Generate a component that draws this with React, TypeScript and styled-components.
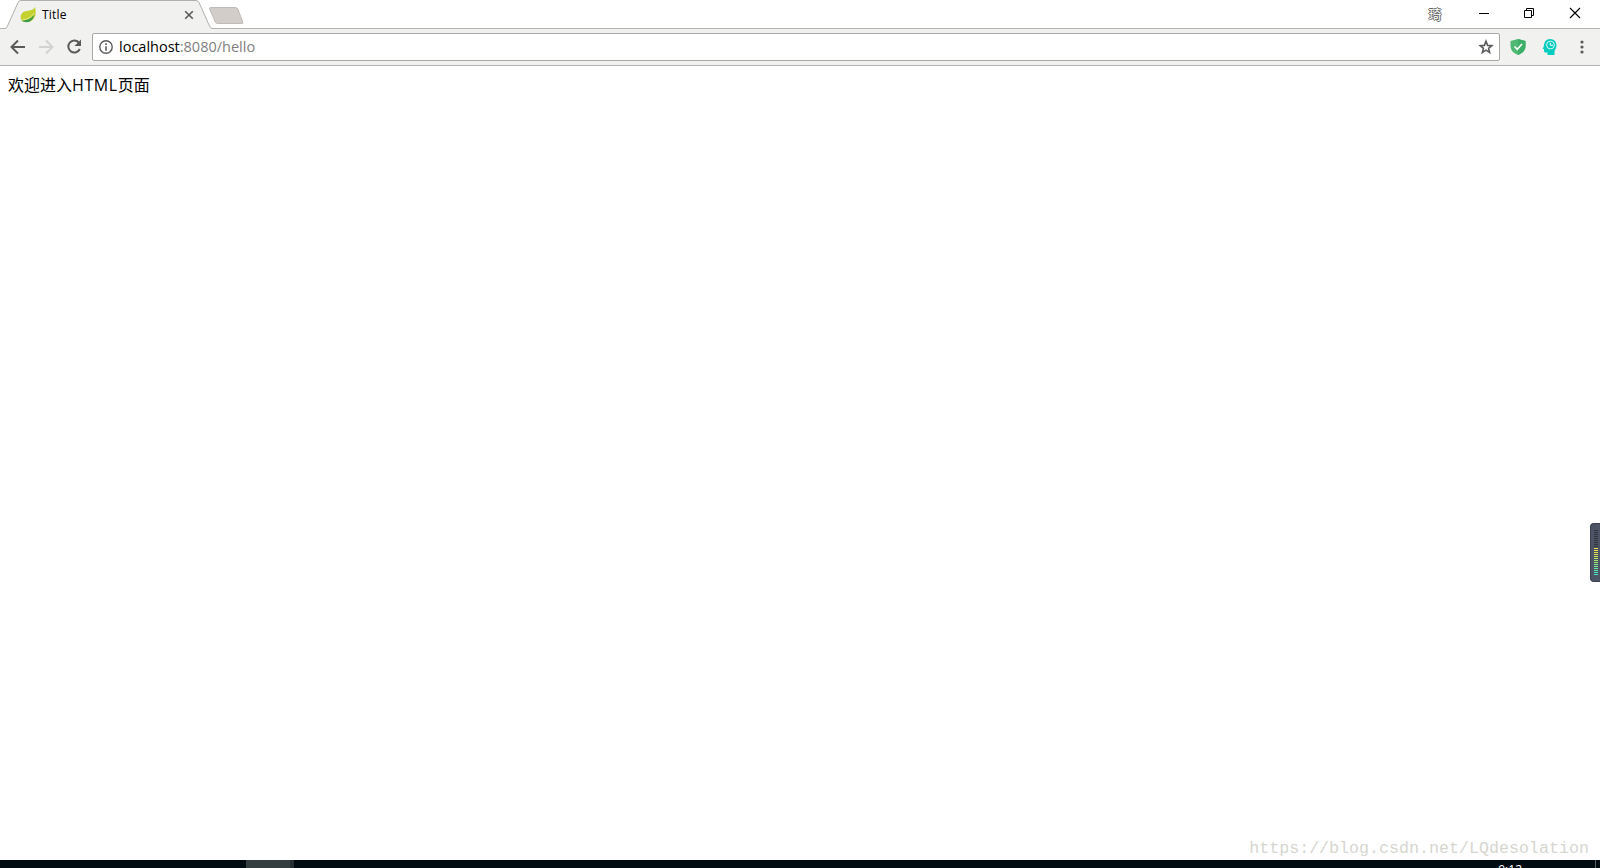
import styled, { createGlobalStyle } from 'styled-components';

const GlobalStyle = createGlobalStyle`
  * {
    box-sizing: border-box;
  }

  body {
    margin: 0;
    overflow: hidden;
    background: #fff;
    font-family: 'Open Sans', 'Noto Sans CJK SC', sans-serif;
  }
`;

const Window = styled.div`
  display: flex;
  flex-direction: column;
  width: 100%;
  height: 868px;
  position: relative;
  overflow: hidden;
`;

const TabStrip = styled.header`
  display: flex;
  height: 29px;
  flex: none;
  background: linear-gradient(#b5b4b1, #b5b4b1) 0 28px / 100% 1px no-repeat #fff;
`;

const Tab = styled.div`
  position: relative;
  display: flex;
  align-items: center;
  width: 207px;
  height: 29px;
  margin-left: 5px;
  padding: 1px 18px 0 15px;
`;

const TabShape = styled.svg`
  position: absolute;
  inset: 0;
`;

const Favicon = styled.svg`
  position: relative;
  flex: none;
`;

const TabTitle = styled.span`
  position: relative;
  flex: 1;
  margin-left: 6px;
  font-size: 12px;
  line-height: 16px;
  letter-spacing: 0.2px;
  color: #000;
`;

const CloseTab = styled.svg`
  position: relative;
  flex: none;
`;

const NewTab = styled.svg`
  margin: 6px 0 0 -4px;
`;

const Caption = styled.div`
  display: flex;
  margin-left: auto;
  padding-top: 4px;
`;

const CaptionButton = styled.svg`
  margin-right: 29px;

  &:nth-last-child(2) {
    margin-right: 28px;
  }

  &:last-child {
    margin-right: 16px;
  }
`;

const Profile = styled.span`
  width: 18px;
  margin-right: 32px;
  padding-top: 1px;
  font-family: 'Noto Sans CJK SC', sans-serif;
  font-size: 13px;
  line-height: 18px;
  text-align: center;
  color: #fff;
  text-shadow: 1px 0 #666, -1px 0 #666, 0 1px #666, 0 -1px #666;
`;

const Toolbar = styled.nav`
  display: flex;
  align-items: center;
  height: 37px;
  flex: none;
  padding: 0 15px 1px 8px;
  background: #f1f1f0;
  border-bottom: 1px solid #b5b4b1;
`;

const NavIcon = styled.svg<{ $gap: number }>`
  flex: none;
  margin-right: ${({ $gap }) => $gap}px;
`;

const AddressBar = styled.div`
  display: flex;
  align-items: center;
  flex: 1;
  height: 28px;
  padding: 0 5px 0 6px;
  background: #fff;
  border: 1px solid #a9a9a7;
  border-radius: 2px;
`;

const Url = styled.span`
  flex: 1;
  margin-left: 6px;
  font-size: 14.5px;
  line-height: 20px;
  color: #7f7f7f;
`;

const Host = styled.span`
  color: #000;
`;

const Extensions = styled.div`
  display: flex;
  align-items: center;
  margin-left: 10px;
`;

const Page = styled.main`
  flex: 1;
  padding: 9px 8px 8px;
  font-family: 'Open Sans', 'Noto Sans CJK SC', sans-serif;
  font-size: 16px;
  line-height: 21px;
  color: #000;
`;

const Latin = styled.span`
  letter-spacing: 0.6px;
`;

const LevelMeter = styled.aside`
  position: absolute;
  top: 523px;
  right: 0;
  display: flex;
  flex-direction: column;
  gap: 1px;
  width: 10px;
  height: 59px;
  padding: 6px 2px 0 3px;
  background: #4c5465;
  border: 1px solid #3b4150;
  border-right: 0;
  border-radius: 4px 0 0 4px;
`;

const LevelBar = styled.i<{ $color: string }>`
  flex: none;
  width: 4px;
  height: 1px;
  background: ${({ $color }) => $color};
`;

const Watermark = styled.span`
  position: absolute;
  right: 11px;
  bottom: 7px;
  font-family: 'Liberation Mono', monospace;
  font-size: 16.66px;
  line-height: 24px;
  color: #d6d6cf;
`;

const Taskbar = styled.footer`
  display: flex;
  height: 8px;
  flex: none;
  overflow: hidden;
  background: #000c11;
`;

const ActiveTask = styled.div`
  width: 48px;
  margin-left: 246px;
  background: #343d3f;
  border-right: 4px solid #252e30;
`;

const Clock = styled.span`
  margin: 2px 73px 0 auto;
  font-size: 12px;
  line-height: 16px;
  color: #fff;
`;

const ShowDesktop = styled.div`
  width: 5px;
  border-left: 1px solid #596164;
`;

const idleLevels = Array(9).fill('#30343f');

const activeLevels = [
  '#f2dd45', '#ece04a', '#e2e24e', '#d8e354', '#c9e65a', '#bae862', '#aae96c',
  '#9aec78', '#8aec84', '#7aec91', '#6aeb9e', '#5ce9ac', '#50e6b9', '#45e3c4',
];

const App = () => {
  return (
    <Window>
      <GlobalStyle />
      <TabStrip>
        <Tab>
          <TabShape width="207" height="29">
            <path d="M0 28.5Q1.5 28.5 2.5 26L13 2.5Q13.8 .5 15.5 .5H191Q193 .5 194 2.5L204.5 26Q205.5 28.5 207 28.5V29H0Z" fill="#f1f1f0" />
            <path d="M0 28.5Q1.5 28.5 2.5 26L13 2.5Q13.8 .5 15.5 .5H191Q193 .5 194 2.5L204.5 26Q205.5 28.5 207 28.5" fill="none" stroke="#b0afac" />
          </TabShape>
          <Favicon width="16" height="16" viewBox="0 0 16 16">
            <path d="M15 0C16 4 16.5 9 13 12.5C10 15.5 5 15.5 2 14C0 12 0 7.500 3 5.300C6.500 3 12.500 4.500 15 0Z" fill="#c4d12e" />
            <path d="M1.500 13.500C6 13.500 11 12 14.500 7.500C13.500 12 10.500 15.200 6.500 15.200C4.500 15.200 2.800 14.800 1.500 13.500Z" fill="#3b9b49" />
            <path d="M1.500 13C7 12.800 11.500 10.500 14.200 6" fill="none" stroke="#eef0ae" strokeWidth=".7" />
          </Favicon>
          <TabTitle>Title</TabTitle>
          <CloseTab width="10" height="10">
            <path d="M1.200 1.200L8.800 8.800M8.800 1.200L1.200 8.800" stroke="#5a5a5a" strokeWidth="1.600" />
          </CloseTab>
        </Tab>
        <NewTab width="36" height="19">
          <path d="M2.500 1.500H27.500Q29 1.500 29.800 3L35 16.500Q35.200 17.500 34 17.500H9.500Q8 17.500 7.300 16L1.500 3Q1 1.500 2.500 1.500Z" fill="#d2cdc8" stroke="#bfbbb7" />
        </NewTab>
        <Caption>
          <Profile>琦</Profile>
          <CaptionButton width="16" height="18">
            <path d="M3 9.500H13" stroke="#000" />
          </CaptionButton>
          <CaptionButton width="17" height="18">
            <path d="M3.500 6.500H10.500V13.500H3.500ZM5.500 6V4.500H12.500V11.500H11" fill="none" stroke="#000" />
          </CaptionButton>
          <CaptionButton width="18" height="18">
            <path d="M4 4L14 14M14 4L4 14" stroke="#000" strokeWidth="1.100" />
          </CaptionButton>
        </Caption>
      </TabStrip>
      <Toolbar>
        <NavIcon $gap={8} width="20" height="20">
          <path d="M17 10H4M10 3.500L3.500 10L10 16.500" fill="none" stroke="#5a5a5a" strokeWidth="2" />
        </NavIcon>
        <NavIcon $gap={8} width="20" height="20">
          <path d="M3 10H16M10 3.500L16.500 10L10 16.500" fill="none" stroke="#d3d2d0" strokeWidth="2" />
        </NavIcon>
        <NavIcon $gap={8} width="20" height="20">
          <path d="M14.800 5.500A6 6 0 1 0 15.800 12" fill="none" stroke="#5a5a5a" strokeWidth="2" />
          <path d="M17 2.500V9H10.500Z" fill="#5a5a5a" />
        </NavIcon>
        <AddressBar>
          <svg width="14" height="14">
            <circle cx="7" cy="7" r="6.200" fill="none" stroke="#5a5a5a" strokeWidth="1.400" />
            <path d="M7 3.300V4.900M7 6.200V10.800" stroke="#5a5a5a" strokeWidth="1.600" />
          </svg>
          <Url>
            <Host>localhost</Host>:8080/hello
          </Url>
          <svg width="16" height="16" viewBox="0 0 16 16">
            <path d="M8 2.300L9.600 6.400L13.800 6.700L10.600 9.400L11.600 13.500L8 11.200L4.400 13.500L5.400 9.400L2.200 6.700L6.400 6.400Z" fill="none" stroke="#5a5a5a" strokeWidth="1.600" />
          </svg>
        </AddressBar>
        <Extensions>
          <NavIcon $gap={16} width="16" height="16">
            <path d="M8 0L15.500 2V7C15.500 11.500 12 14.500 8 16C4 14.500 .5 11.500 .5 7V2Z" fill="#4fb873" />
            <path d="M8 0L15.500 2V7C15.500 11.500 12 14.500 8 16Z" fill="#3dae67" />
            <path d="M4.500 7.500L7.300 10.300L12 5" fill="none" stroke="#fff" strokeWidth="1.700" />
          </NavIcon>
          <NavIcon $gap={22} width="16" height="16">
            <path d="M8 0C12 0 14.500 2.800 14.500 6.500C14.500 9.500 12.500 10.500 12.500 13V16H5.500V13.500H3.500Q2 13.500 2 12V10H.8L2 6.500C2 2.800 4.500 0 8 0Z" fill="#00cdbf" />
            <circle cx="8.500" cy="6" r="3.900" fill="none" stroke="#d9f8f5" strokeWidth="1" />
            <path d="M8.300 3.800V6.300H11" fill="none" stroke="#fff" strokeWidth="1" />
          </NavIcon>
          <NavIcon $gap={0} width="5" height="14">
            <circle cx="2" cy="2" r="1.600" fill="#5a5a5a" />
            <circle cx="2" cy="7" r="1.600" fill="#5a5a5a" />
            <circle cx="2" cy="12" r="1.600" fill="#5a5a5a" />
          </NavIcon>
        </Extensions>
      </Toolbar>
      <Page>
        欢迎进入<Latin>HTML</Latin>页面
      </Page>
      <LevelMeter>
        {[...idleLevels, ...activeLevels].map((color, index) => (
          <LevelBar key={index} $color={color} />
        ))}
      </LevelMeter>
      <Watermark>https://blog.csdn.net/LQdesolation</Watermark>
      <Taskbar>
        <ActiveTask />
        <Clock>9:12</Clock>
        <ShowDesktop />
      </Taskbar>
    </Window>
  );
};

export default App;
